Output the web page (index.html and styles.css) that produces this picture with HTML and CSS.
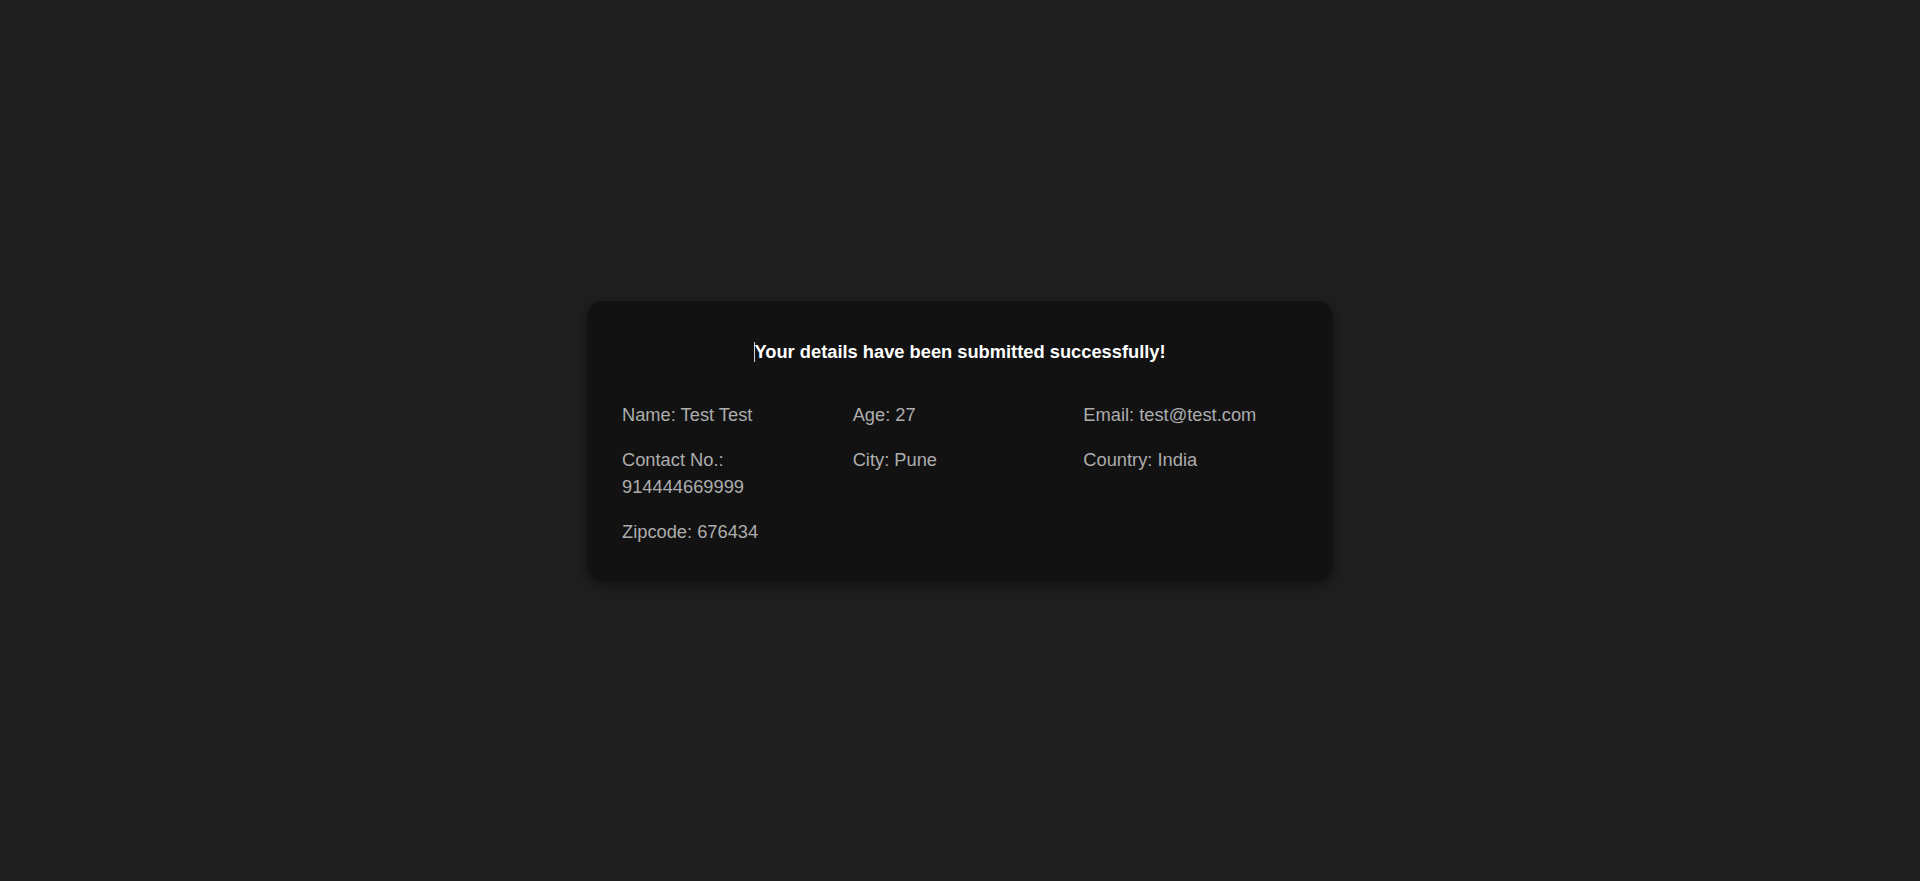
FILE: index.html
```html
<!DOCTYPE html>
<html lang="en">
<head>
<meta charset="utf-8">
<title>Submitted</title>
<link rel="stylesheet" href="styles.css">
</head>
<body>
<main class="page">
  <section class="card">
    <h3 class="title"><span class="caret"></span>Your details have been submitted successfully!</h3>
    <div class="details">
      <p class="item">Name: Test Test</p>
      <p class="item">Age: 27</p>
      <p class="item">Email: test@test.com</p>
      <p class="item">Contact No.: 914444669999</p>
      <p class="item">City: Pune</p>
      <p class="item">Country: India</p>
      <p class="item">Zipcode: 676434</p>
    </div>
  </section>
</main>
</body>
</html>
```
FILE: styles.css
```css
html, body {
  margin: 0;
  padding: 0;
  height: 100%;
  background: #1f1f1f;
}
body {
  font-family: "Liberation Sans", Arial, sans-serif;
}
.page {
  min-height: 100vh;
  display: flex;
  align-items: center;
  justify-content: center;
}
.card {
  width: 746px;
  box-sizing: border-box;
  padding: 37px 35px 36px;
  background: #121212;
  border-radius: 16px;
  box-shadow: 0 4px 16px rgba(0, 0, 0, 0.45);
}
.title {
  margin: 0 0 36px;
  font-size: 18.3px;
  line-height: 27px;
  font-weight: bold;
  color: #ffffff;
  text-align: center;
}
.caret {
  display: inline-block;
  width: 1px;
  height: 20px;
  margin-right: -1px;
  background: #d0d0d0;
  vertical-align: -4px;
}
.details {
  display: grid;
  grid-template-columns: repeat(3, 1fr);
  column-gap: 16px;
  row-gap: 18px;
}
.item {
  margin: 0;
  font-size: 18.3px;
  line-height: 27px;
  color: #adadad;
}
```
